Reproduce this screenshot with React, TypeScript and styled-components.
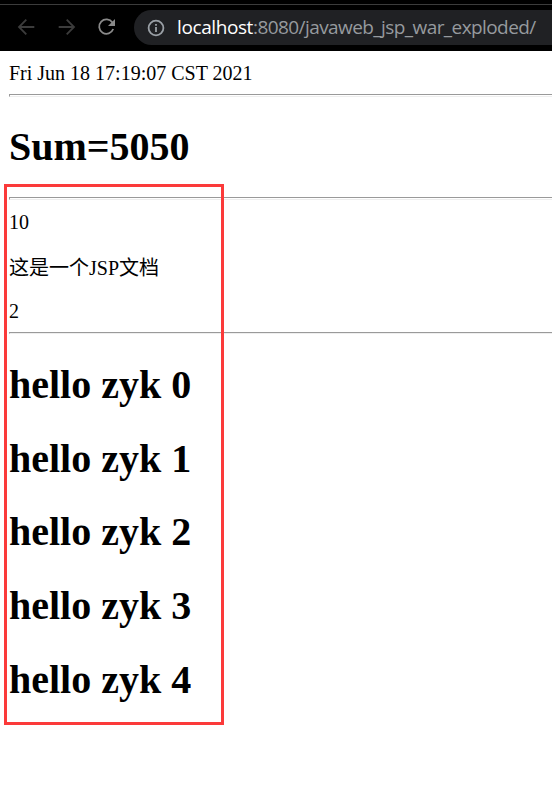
import React from "react";
import styled, { createGlobalStyle } from "styled-components";

const GlobalStyle = createGlobalStyle`
  body { margin: 0; background: #fff; overflow: hidden; }
`;

const Window = styled.div`
  position: relative;
  width: 552px;
  height: 802px;
  overflow: hidden;
  background: #fff;
`;

const Toolbar = styled.header`
  box-sizing: border-box;
  display: flex;
  height: 51px;
  padding: 5px 0 6px 16px;
  background: linear-gradient(#000 4px, #3c3c3c 4px, #3c3c3c 5px, #000 5px);
`;

const NavButtons = styled.nav`
  display: flex;
  align-items: center;
  gap: 20px;
  width: 118px;
  height: 44px;
`;

const Icon = styled.svg<{ $color: string }>`
  flex: none;
  width: 20px;
  height: 20px;
  fill: none;
  stroke: ${(p) => p.$color};
  stroke-width: 1.8;
`;

const AddressBar = styled.div`
  box-sizing: border-box;
  display: flex;
  align-items: center;
  flex: 1;
  height: 35px;
  margin-top: 5px;
  padding-left: 12px;
  border-radius: 18px 0 0 18px;
  background: #202124;
`;

const Url = styled.div`
  margin: -2px 0 0 11px;
  font: 19px/26px "Open Sans", "Noto Sans", sans-serif;
  white-space: nowrap;
  color: #969a9e;
`;

const Host = styled.span`
  display: inline-block;
  width: 76px;
  letter-spacing: -0.4px;
  color: #fff;
`;

const Path = styled.span`
  letter-spacing: -0.58px;
`;

const Page = styled.main`
  padding: 10px 0 0 9px;
  font-family: "Liberation Serif", "Noto Sans CJK SC", serif;
  color: #000;
`;

const Line = styled.p<{ $top?: number }>`
  height: 22px;
  margin: ${(p) => p.$top ?? 0}px 0 0;
  font-size: 20px;
  line-height: 24px;
  white-space: nowrap;
`;

const Rule = styled.hr<{ $top: number; $height?: number }>`
  box-sizing: border-box;
  height: ${(p) => p.$height ?? 3}px;
  margin: ${(p) => p.$top}px 0 0;
  border: solid;
  border-width: 1px 0 1px 1px;
  border-color: #9a9a9a #eee #eee #9a9a9a;
`;

const Heading = styled.h1<{ $top: number }>`
  height: 45px;
  margin: ${(p) => p.$top}px 0 0;
  font-size: 40px;
  line-height: 45px;
  white-space: nowrap;
`;

const Highlight = styled.div`
  position: absolute;
  box-sizing: border-box;
  left: 4px;
  top: 184px;
  width: 220px;
  height: 541px;
  border: 3px solid #fb3a3a;
`;

const greetings = [0, 1, 2, 3, 4];

export default function App() {
  return (
    <Window>
      <GlobalStyle />
      <Toolbar>
        <NavButtons>
          <Icon $color="#3c3c3c" viewBox="0 0 20 20">
            <path d="M18.3 10H3.5M10.3 2.7 3 10l7.3 7.3" />
          </Icon>
          <Icon $color="#3c3c3c" viewBox="0 0 20 20">
            <path d="M2.7 10h14.8M10.7 2.7 18 10l-7.3 7.3" />
          </Icon>
          <Icon $color="#8a8a8a" viewBox="0 0 20 20">
            <path d="M16.4 5.6A7.2 7.2 0 1 0 17.2 12" />
            <path d="M19 2v7h-7z" fill="#8a8a8a" stroke="none" />
          </Icon>
        </NavButtons>
        <AddressBar>
          <Icon $color="#9aa0a6" viewBox="0 0 20 20">
            <circle cx="10" cy="10" r="7.4" />
            <path d="M10 9v5M10 6v1.8" />
          </Icon>
          <Url>
            <Host>localhost</Host>
            <Path>:8080/javaweb_jsp_war_exploded/</Path>
          </Url>
        </AddressBar>
      </Toolbar>
      <Page>
        <Line>Fri Jun 18 17:19:07 CST 2021</Line>
        <Rule $top={11} />
        <Heading $top={27}>Sum=5050</Heading>
        <Rule $top={28} />
        <Line $top={10}>10</Line>
        <Line $top={24}>这是一个JSP文档</Line>
        <Line $top={21}>2</Line>
        <Rule $top={11} $height={2} />
        {greetings.map((n) => (
          <Heading key={n} $top={n === 0 ? 28 : 28.7}>
            hello zyk {n}
          </Heading>
        ))}
      </Page>
      <Highlight />
    </Window>
  );
}
